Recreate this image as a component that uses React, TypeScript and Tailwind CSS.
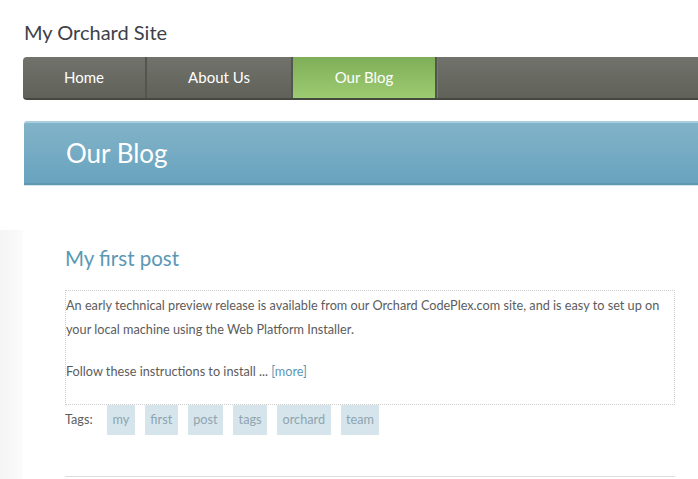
const font = "font-['Segoe_UI','Lato','Open_Sans',sans-serif]";

const navItems = [
  { label: "Home", width: "w-[124px]", active: false },
  { label: "About Us", width: "w-[146px]", active: false },
  { label: "Our Blog", width: "w-[144px]", active: true },
];

const tags = ["my", "first", "post", "tags", "orchard", "team"];

export default function App() {
  return (
    <div className={`h-[479px] w-full overflow-hidden bg-white ${font}`}>
      <h1 className="pl-6 pt-[18px] text-[20px] leading-[28px] text-[#3d4148]">My Orchard Site</h1>

      <nav className="ml-[23px] mt-[11px] flex h-[43px] overflow-hidden rounded-l-[4px] border-b-2 border-[#45483f] bg-gradient-to-b from-[#71726b] to-[#60625a]">
        {navItems.map((item) => (
          <div
            key={item.label}
            className={`flex ${item.width} shrink-0 items-center justify-center border-r-2 border-r-[#53554f] text-[15px] text-white ${
              item.active ? "bg-gradient-to-b from-[#7fae58] to-[#9dcb72]" : ""
            }`}
          >
            {item.label}
          </div>
        ))}
        <div className="flex-1 border-l border-l-[#787a73]" />
      </nav>

      <header className="ml-6 mt-[21px] flex h-[64px] items-center rounded-tl-[3px] border-t-2 border-b-2 border-t-[#a9cfdf] border-b-[#5f97ae] bg-gradient-to-b from-[#82b3c8] to-[#68a3bf] pl-[42px] shadow-[0_1px_0_#d6e6ee]">
        <h2 className="text-[26px] leading-none text-white">Our Blog</h2>
      </header>

      <div className="flex">
        <div className="mt-[45px] h-[300px] w-[23px] shrink-0 bg-gradient-to-r from-[#f5f5f5] to-[#fbfbfb]" />
        <main className="w-[652px] pl-[42px] pt-[59px]">
          <h3 className="text-[20.5px] leading-[28px] text-[#5b98b4]">My first post</h3>

          <div className="mt-[18px] border border-dotted border-[#cfcfcf] pt-[2px] text-[12.7px] leading-[24px] text-[#5c5c5c]">
            <p className="mb-[18px]">
              An early technical preview release is available from our Orchard CodePlex.com site, and is easy to set up on
              <br />
              your local machine using the Web Platform Installer.
            </p>
            <p className="mb-[21px]">
              Follow these instructions to install ... <a className="text-[#5b98b4]">[more]</a>
            </p>
          </div>

          <div className="flex items-center gap-[10px] text-[12.7px] text-[#5c5c5c]">
            <span className="w-[32px]">Tags:</span>
            {tags.map((tag) => (
              <span key={tag} className="flex h-[30px] items-center bg-[#d6e5ec] px-[5.5px] text-[#8ea4ae]">
                {tag}
              </span>
            ))}
          </div>

          <div className="mt-[41px] border-t border-[#dddddd]" />
        </main>
      </div>
    </div>
  );
}
